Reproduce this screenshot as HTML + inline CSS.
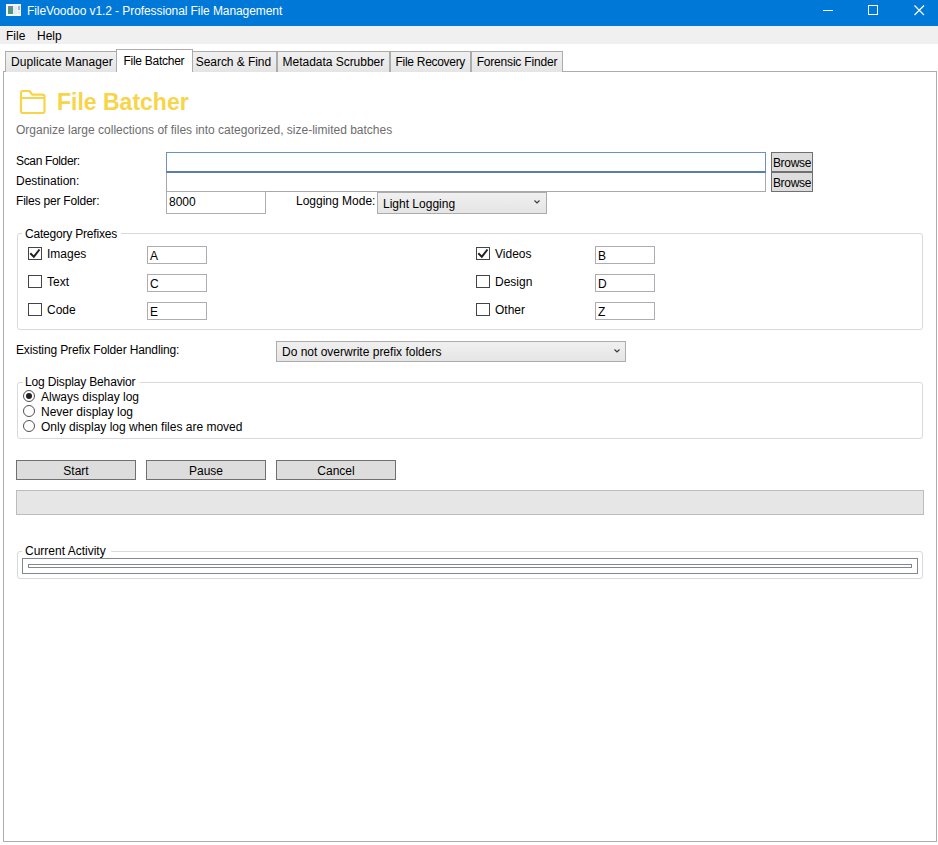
<!DOCTYPE html>
<html><head><meta charset="utf-8">
<style>
*{box-sizing:border-box;margin:0;padding:0}
html,body{width:938px;height:845px;overflow:hidden;background:#fff}
body{position:relative;font-family:"Liberation Sans",sans-serif;font-size:12px;color:#000}
.a{position:absolute}
.t{position:absolute;line-height:14px;white-space:nowrap}
#title{left:0;top:0;width:938px;height:26px;background:#0078d7}
#menu{left:0;top:26px;width:938px;height:18px;background:#f0f0f0}
.tab{position:absolute;top:51px;height:21px;background:#f0f0f0;border:1px solid #acacac;border-bottom:none;background:linear-gradient(#f0f0f0,#e5e5e5)}
.tab span{position:absolute;left:5px;top:3px;line-height:14px;white-space:nowrap}
#content{left:3px;top:71px;width:934px;height:771px;border:1px solid #acacac;background:#fff}
.tb{position:absolute;border:1px solid #abadb3;background:#fff}
.btn{position:absolute;border:1px solid #707070;background:#dddddd;text-align:center;line-height:21px}
.grp{position:absolute;border:1px solid #d9d9d9;border-radius:3px}
.cb{position:absolute;width:14px;height:13px;border:1px solid #444;background:#fff}
.rb{position:absolute;width:12px;height:12px;border:1px solid #505050;border-radius:50%;background:#fff}
.combo{position:absolute;border:1px solid #acacac;background:linear-gradient(#f0f0f0,#e5e5e5)}
</style></head><body>
<div id="title" class="a">
  <svg class="a" style="left:0;top:0" width="26" height="22">
    <rect x="6" y="4" width="15" height="12" fill="#f2f6fb"/>
    <rect x="8" y="6" width="5" height="8" fill="#4f987c"/>
    <rect x="8" y="6" width="5" height="2" fill="#7c7fa6"/>
    <rect x="13" y="6" width="4" height="8" fill="#e3ecf0"/>
    <rect x="18" y="6" width="2" height="4" fill="#a9b3b8"/>
    <rect x="18" y="11" width="2" height="3" fill="#f3e1dc"/>
  </svg>
  <div class="t" style="left:27px;top:4px;color:#fff;letter-spacing:-0.08px">FileVoodoo v1.2 - Professional File Management</div>
  <svg class="a" style="left:815px;top:0" width="120" height="25" viewBox="0 0 120 25">
    <path d="M8 10.5 H18" stroke="#fff" stroke-width="1" fill="none"/>
    <rect x="53.5" y="5.5" width="9" height="9" stroke="#fff" stroke-width="1" fill="none"/>
    <path d="M99.5 5.5 L109 15 M109 5.5 L99.5 15" stroke="#fff" stroke-width="1.2" fill="none"/>
  </svg>
</div>
<div id="menu" class="a">
  <div class="t" style="left:6px;top:3px">File</div>
  <div class="t" style="left:37px;top:3px">Help</div>
</div>
<div id="content" class="a"></div>
<div class="tab" style="left:5px;width:112px"><span style="left:5px;letter-spacing:0.07px">Duplicate Manager</span></div>
<div class="tab" style="left:192px;width:85px"><span style="left:2.8px;letter-spacing:-0.06px">Search &amp; Find</span></div>
<div class="tab" style="left:277px;width:113px"><span style="left:4.6px;letter-spacing:-0.03px">Metadata Scrubber</span></div>
<div class="tab" style="left:390px;width:81px"><span style="left:4.6px;letter-spacing:-0.3px">File Recovery</span></div>
<div class="tab" style="left:471px;width:92px"><span style="left:4.7px;letter-spacing:-0.19px">Forensic Finder</span></div>
<div class="tab" style="left:116px;top:49px;width:77px;height:23px;background:#fff"><span style="left:6.5px;top:4px;letter-spacing:-0.27px">File Batcher</span></div>

<!-- header -->
<svg class="a" style="left:14px;top:84px" width="38" height="34" viewBox="0 0 38 34">
  <path d="M7 9 Q7 7 9 7 H15.4 L18.4 10.7 H28.5 Q30.5 10.7 30.5 12.7 V27 Q30.5 29 28.5 29 H9 Q7 29 7 27 Z M7 14 H30.5" fill="none" stroke="#f8d448" stroke-width="2.2" stroke-linejoin="round"/>
</svg>
<div class="t" style="left:57px;top:89px;line-height:26px;font-size:23px;font-weight:bold;color:#f8d448">File Batcher</div>
<div class="t" style="left:16px;top:123px;color:#6d6d6d">Organize large collections of files into categorized, size-limited batches</div>

<!-- form rows -->
<div class="t" style="left:16px;top:154px;letter-spacing:-0.35px">Scan Folder:</div>
<div class="tb" style="left:166px;top:152px;width:600px;height:21px;border-color:#6b93bf;border-bottom:2px solid #5a7fa8"></div>
<div class="btn br" style="left:771px;top:152px;width:42px;height:20px;letter-spacing:-0.3px">Browse</div>
<div class="t" style="left:16px;top:174px">Destination:</div>
<div class="tb" style="left:166px;top:173px;width:600px;height:19px;border-top:none;border-color:#a8a8a8"></div>
<div class="btn br" style="left:771px;top:172px;width:42px;height:20px;letter-spacing:-0.3px">Browse</div>
<div class="t" style="left:16px;top:194px;letter-spacing:-0.2px">Files per Folder:</div>
<div class="tb" style="left:166px;top:191px;width:100px;height:23px"></div>
<div class="t" style="left:169px;top:195px">8000</div>
<div class="t" style="left:296px;top:194px">Logging Mode:</div>
<div class="combo" style="left:377px;top:192px;width:170px;height:22px"></div>
<div class="t" style="left:383px;top:197px">Light Logging</div>
<svg class="a" style="left:533px;top:199px" width="8" height="6"><path d="M1.5 1.5 L4 4 L6.5 1.5" fill="none" stroke="#3c3c3c" stroke-width="1.2"/></svg>

<!-- category prefixes -->
<div class="grp" style="left:17px;top:233px;width:906px;height:97px"></div>
<div class="a" style="left:22px;top:228px;width:99px;height:10px;background:#fff"></div>
<div class="t" style="left:25px;top:227px;letter-spacing:-0.2px">Category Prefixes</div>
<div class="cb" style="left:28px;top:247px"></div>
<svg class="a" style="left:28px;top:247px" width="14" height="13"><path d="M2.3 6.3 L5.8 9.8 L11.5 2.5" fill="none" stroke="#222" stroke-width="2"/></svg>
<div class="t" style="left:47px;top:247px">Images</div>
<div class="tb" style="left:147px;top:246px;width:60px;height:18px"></div>
<div class="t" style="left:150px;top:249px">A</div>
<div class="cb" style="left:476px;top:247px"></div>
<svg class="a" style="left:476px;top:247px" width="14" height="13"><path d="M2.3 6.3 L5.8 9.8 L11.5 2.5" fill="none" stroke="#222" stroke-width="2"/></svg>
<div class="t" style="left:495px;top:247px">Videos</div>
<div class="tb" style="left:595px;top:246px;width:60px;height:18px"></div>
<div class="t" style="left:598px;top:249px">B</div>
<div class="cb" style="left:28px;top:275px"></div>
<div class="t" style="left:47px;top:275px">Text</div>
<div class="tb" style="left:147px;top:274px;width:60px;height:18px"></div>
<div class="t" style="left:150px;top:277px">C</div>
<div class="cb" style="left:476px;top:275px"></div>
<div class="t" style="left:495px;top:275px">Design</div>
<div class="tb" style="left:595px;top:274px;width:60px;height:18px"></div>
<div class="t" style="left:598px;top:277px">D</div>
<div class="cb" style="left:28px;top:303px"></div>
<div class="t" style="left:47px;top:303px">Code</div>
<div class="tb" style="left:147px;top:302px;width:60px;height:18px"></div>
<div class="t" style="left:150px;top:305px">E</div>
<div class="cb" style="left:476px;top:303px"></div>
<div class="t" style="left:495px;top:303px">Other</div>
<div class="tb" style="left:595px;top:302px;width:60px;height:18px"></div>
<div class="t" style="left:598px;top:305px">Z</div>

<!-- existing prefix -->
<div class="t" style="left:16px;top:343px;letter-spacing:-0.13px">Existing Prefix Folder Handling:</div>
<div class="combo" style="left:276px;top:341px;width:350px;height:21px"></div>
<div class="t" style="left:282px;top:345px">Do not overwrite prefix folders</div>
<svg class="a" style="left:612.5px;top:348px" width="8" height="6"><path d="M1.5 1.5 L4 4 L6.5 1.5" fill="none" stroke="#3c3c3c" stroke-width="1.2"/></svg>

<!-- log display -->
<div class="grp" style="left:17px;top:382px;width:906px;height:57px"></div>
<div class="a" style="left:23px;top:377px;width:117px;height:10px;background:#fff"></div>
<div class="t" style="left:25px;top:375px;letter-spacing:-0.15px">Log Display Behavior</div>
<div class="rb" style="left:23px;top:390px"></div>
<div class="a" style="left:26px;top:393px;width:6px;height:6px;border-radius:50%;background:#222"></div>
<div class="t" style="left:41px;top:390px">Always display log</div>
<div class="rb" style="left:23px;top:405px"></div>
<div class="t" style="left:41px;top:405px">Never display log</div>
<div class="rb" style="left:23px;top:420px"></div>
<div class="t" style="left:41px;top:420px">Only display log when files are moved</div>

<!-- buttons -->
<div class="btn" style="left:16px;top:460px;width:120px;height:20px">Start</div>
<div class="btn" style="left:146px;top:460px;width:120px;height:20px">Pause</div>
<div class="btn" style="left:276px;top:460px;width:120px;height:20px">Cancel</div>
<div class="a" style="left:16px;top:490px;width:908px;height:25px;border:1px solid #bcbcbc;background:#e6e6e6"></div>

<!-- current activity -->
<div class="grp" style="left:17px;top:551px;width:906px;height:28px"></div>
<div class="a" style="left:22px;top:546px;width:89px;height:10px;background:#fff"></div>
<div class="t" style="left:25px;top:544px">Current Activity</div>
<div class="a" style="left:22px;top:558px;width:896px;height:16px;border:1px solid #828790"></div>
<div class="a" style="left:28px;top:564px;width:884px;height:4px;border:1px solid #828790"></div>

</body></html>
